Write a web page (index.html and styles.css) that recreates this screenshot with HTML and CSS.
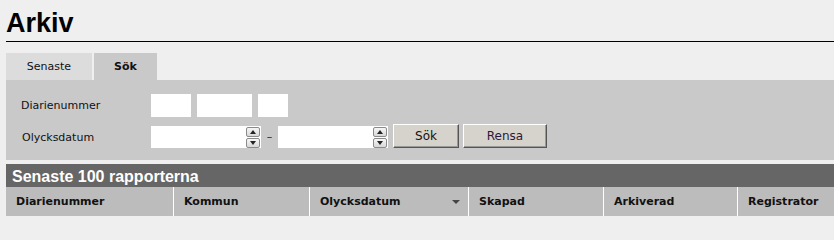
FILE: index.html
```html
<!DOCTYPE html>
<html lang="sv">
<head>
<meta charset="utf-8">
<title>Arkiv</title>
<link rel="stylesheet" href="styles.css">
</head>
<body>
<h1 class="page-title">Arkiv</h1>

<div class="tabs">
  <div class="tab">Senaste</div>
  <div class="tab tab-active">Sök</div>
</div>

<div class="panel">
  <div class="form-row row-1">
    <label class="label">Diarienummer</label>
    <div class="field-group">
      <span class="input w40"></span>
      <span class="input w55"></span>
      <span class="input w30"></span>
    </div>
  </div>
  <div class="form-row row-2">
    <label class="label">Olycksdatum</label>
    <div class="field-group">
      <span class="date-input">
        <span class="spinner">
          <span class="spin spin-up"></span>
          <span class="spin spin-down"></span>
        </span>
      </span>
      <span class="dash">–</span>
      <span class="date-input">
        <span class="spinner">
          <span class="spin spin-up"></span>
          <span class="spin spin-down"></span>
        </span>
      </span>
      <button class="btn btn-search">Sök</button>
      <button class="btn btn-clear">Rensa</button>
    </div>
  </div>
</div>

<div class="results">
  <div class="results-title">Senaste 100 rapporterna</div>
  <div class="col-head">
    <div class="cell c1">Diarienummer</div>
    <div class="cell c2">Kommun</div>
    <div class="cell c3"><span>Olycksdatum</span><span class="sort-arrow"></span></div>
    <div class="cell c4">Skapad</div>
    <div class="cell c5">Arkiverad</div>
    <div class="cell c6">Registrator</div>
  </div>
</div>
</body>
</html>
```

FILE: styles.css
```css
html, body {
  margin: 0;
  padding: 0;
  overflow: hidden;
}
body {
  background: #efefef;
  padding-left: 6px;
  font-family: "DejaVu Sans", Verdana, sans-serif;
  font-size: 11px;
  color: #000;
}

.page-title {
  margin: 0;
  padding: 8px 0 2px 0;
  font-family: "Liberation Sans", Arial, sans-serif;
  font-weight: bold;
  font-size: 27px;
  line-height: 31px;
  border-bottom: 1px solid #000;
  width: 828px;
}

.tabs {
  display: flex;
  gap: 2px;
  margin-top: 11px;
}
.tab {
  height: 27px;
  line-height: 27px;
  width: 86px;
  text-align: center;
  background: #dcdcdc;
  color: #111;
}
.tab-active {
  width: 63px;
  background: #c9c9c9;
  font-weight: bold;
}

.panel {
  background: #c9c9c9;
  width: 828px;
  padding: 14px 0 12px 15px;
  box-sizing: border-box;
}
.form-row {
  display: flex;
  align-items: center;
}
.row-2 {
  margin-top: 7px;
  align-items: flex-end;
}
.label {
  width: 130px;
  color: #111;
}
.row-2 .label {
  padding-left: 1px;
  width: 129px;
  margin-bottom: 4px;
}
.field-group {
  display: flex;
  align-items: center;
  gap: 6px;
}
.row-2 .field-group {
  gap: 0;
  align-items: flex-end;
}
.input {
  display: block;
  height: 23px;
  background: #fff;
}
.w40 { width: 40px; }
.w55 { width: 55px; }
.w30 { width: 30px; }

.date-input {
  display: flex;
  justify-content: flex-end;
  align-items: center;
  width: 110px;
  height: 22px;
  background: #fff;
}
.spinner {
  display: flex;
  flex-direction: column;
  gap: 1px;
  margin-right: 1px;
}
.spin {
  display: block;
  position: relative;
  width: 12px;
  height: 8px;
  border: 1px solid #8a8a8a;
  border-radius: 2px;
  background: linear-gradient(#f6f6f6, #d8d8d8);
}
.spin::after {
  content: "";
  position: absolute;
  left: 3px;
  top: 2px;
  border-left: 3px solid transparent;
  border-right: 3px solid transparent;
}
.spin-up::after {
  border-bottom: 4px solid #222;
}
.spin-down::after {
  border-top: 4px solid #222;
}
.dash {
  width: 17px;
  text-align: center;
  line-height: 22px;
  color: #222;
}
.btn {
  font-family: "DejaVu Sans", Verdana, sans-serif;
  font-size: 12px;
  height: 24px;
  padding: 0;
  margin: 0;
  background: #d6d3cc;
  color: #111;
  border: 1px solid;
  border-color: #fff #555 #555 #fff;
  box-shadow: inset -1px -1px 0 #999;
}
.btn-search {
  width: 66px;
  margin-left: 5px;
}
.btn-clear {
  width: 84px;
  margin-left: 4px;
  color: #2a1a3a;
}

.results {
  margin-top: 4px;
  width: 828px;
}
.results-title {
  background: #666;
  color: #fff;
  font-family: "Liberation Sans", Arial, sans-serif;
  font-weight: bold;
  font-size: 16px;
  height: 23px;
  line-height: 21px;
  padding: 2px 0 0 6px;
  box-sizing: border-box;
}
.col-head {
  display: grid;
  grid-template-columns: 167px 136px 159px 135px 134px 1fr;
  background: #bcbcbc;
  font-weight: bold;
  color: #111;
}
.cell {
  padding: 8px 0 8px 10px;
  line-height: 13px;
}
.cell + .cell {
  border-left: 1px solid #fff;
}
.c3 {
  display: flex;
  justify-content: space-between;
  align-items: center;
  padding-right: 8px;
}
.sort-arrow {
  width: 0;
  height: 0;
  border-left: 4px solid transparent;
  border-right: 4px solid transparent;
  border-top: 4px solid #444;
}
```
